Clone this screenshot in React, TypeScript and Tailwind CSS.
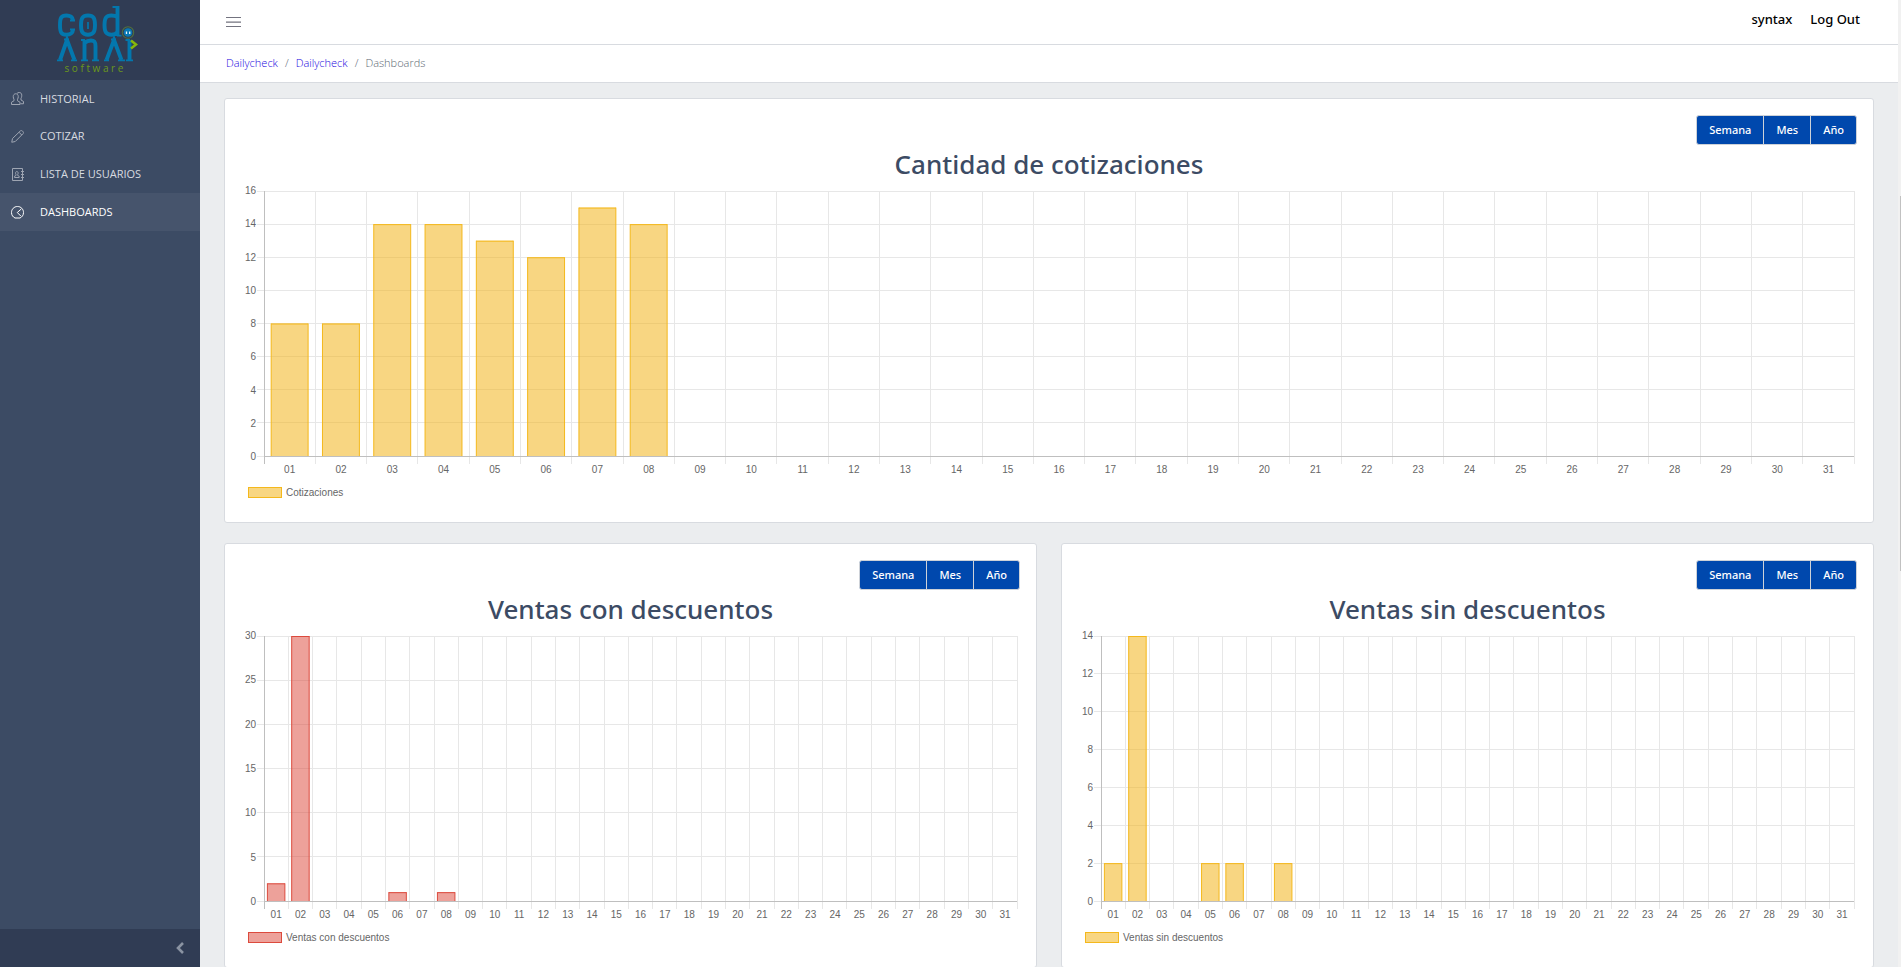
import type { ReactNode } from "react";

type Tone = { fill: string; stroke: string };

const YELLOW: Tone = { fill: "#f2b41c8c", stroke: "#f4b81c" };
const RED: Tone = { fill: "#dc463982", stroke: "#dc4a3d" };
const DAYS = Array.from({ length: 31 }, (_, i) => String(i + 1).padStart(2, "0"));

function Logo() {
  return (
    <svg viewBox="0 0 100 80" className="h-20 w-[100px]" role="img" aria-label="CodAnai software">
      <g fill="none" stroke="#0377ad" strokeWidth="3.900">
        <path d="M23 20.500C23 17 20 15.500 16.500 15.500C11 15.500 10 18 10 25C10 32 11 34.700 16.500 34.700C20 34.700 23 33 23 29.500" />
        <path d="M38 15.500C32.500 15.500 31 18 31 25C31 32 32.500 34.700 38 34.700C43.500 34.700 45 32 45 25C45 18 43.500 15.500 38 15.500Z" />
        <path d="M38 22V29" strokeWidth="1.700" />
        <path d="M67.500 6V36M67.500 17C65.500 15.800 63.500 15.500 61.500 15.500C56 15.500 54.500 18 54.500 25C54.500 32 56 34.700 61.500 34.700C64 34.700 66 34 67.500 32" />
        <path d="M62.500 7H69M67 35.700H71.500M20 20.500H25M20 29.500H25" strokeWidth="1.800" />
        <path d="M10 60L17 40L24.500 60M56.500 60L64 40L71.500 60" />
        <path d="M34.500 40V60M34.500 43C37 40.800 39 40.500 41 40.500C44.500 40.500 45.500 42 45.500 46V60M79.500 40V60" />
        <path d="M7 60.300H13M21 60.300H27M31 40H35M31 60.300H38M42 60.300H49M54 60.300H59M68 60.300H75M14 39.500H19M61 39.500H66M75.500 40H80M76 60.300H83" strokeWidth="1.800" />
      </g>
      <circle cx="78" cy="32.500" r="5.700" fill="none" stroke="#4f7040" strokeWidth="1.100" />
      <circle cx="78" cy="32.500" r="4.300" fill="#0879b5" />
      <path d="M76.500 31.500V34M79.700 31.500V34" stroke="#e9f5fb" strokeWidth="1.300" />
      <path d="M81 40.500L86 44.500L81 48.500" fill="none" stroke="#86b80b" strokeWidth="2.500" />
      <text x="14.500" y="72" fill="#6a981b" fontFamily="Open Sans, sans-serif" fontSize="10" letterSpacing="2.600">
        software
      </text>
    </svg>
  );
}

function Icon({ children }: { children: ReactNode }) {
  return (
    <svg viewBox="0 0 26 26" className="size-[13px] shrink-0" fill="none" stroke="currentColor" strokeWidth="2" aria-hidden="true">
      {children}
    </svg>
  );
}

const NAV = [
  {
    label: "HISTORIAL",
    icon: (
      <Icon>
        <path d="M1 25V20.500L6 17.500V14.500C5 13 4.500 11.500 4.500 9C4.500 5.500 6.800 3.500 9.500 3.500C12.200 3.500 14.500 5.500 14.500 9C14.500 11.500 14 13 13 14.500V17.500L18 20.500V25Z" />
        <path d="M12 3C13 1.500 14.500 1 16.500 1C19.500 1 21.500 3 21.500 6.500C21.500 9.500 21 11 20 12.500V16L25 19V23.500H19" />
      </Icon>
    ),
  },
  {
    label: "COTIZAR",
    icon: (
      <Icon>
        <path d="M1.500 24.500L3 17L18.500 2C20 .8 21.500 .8 23 2.200L23.800 3C25.200 4.500 25.200 6 24 7.500L8.500 23L1.500 24.500ZM16 4.500L21.500 10" />
      </Icon>
    ),
  },
  {
    label: "LISTA DE USUARIOS",
    icon: (
      <Icon>
        <path d="M3 1H23V25H3ZM20 7H26M20 13H26M20 19H26" />
        <path d="M7 19V16.500L10 15V13C9.200 12 9.200 11 9.200 10C9.200 8.200 10 7 11.700 7C13.400 7 14.200 8.200 14.200 10C14.200 11 14.200 12 13.400 13V15L16.400 16.500V19Z" />
      </Icon>
    ),
  },
  {
    label: "DASHBOARDS",
    active: true,
    icon: (
      <Icon>
        <path d="M8 24C4 22 1 18.500 1 13C1 6.500 6 1 13 1C20 1 25 6.500 25 13C25 18.500 22 22 18 24ZM20.500 6L12.500 13L19.500 20" />
      </Icon>
    ),
  },
];

function Sidebar() {
  return (
    <aside className="flex w-[200px] shrink-0 flex-col bg-[#3c4b64]">
      <a href="#inicio" className="flex h-20 justify-center bg-[#303c54]">
        <Logo />
      </a>
      <nav className="grid h-[151px] grid-rows-4">
        {NAV.map((item) => (
          <a
            key={item.label}
            href="#menu"
            aria-current={item.active ? "page" : undefined}
            className={
              item.active
                ? "flex items-center gap-4 bg-[#46546c] pl-[11px] text-[11px] text-white"
                : "flex items-center gap-4 pl-[11px] text-[11px] text-[#d8dbe0]"
            }
          >
            <span className={item.active ? "text-white" : "text-[#9ea5b2]"}>{item.icon}</span>
            {item.label}
          </a>
        ))}
      </nav>
      <button type="button" aria-label="Contraer menú" className="mt-auto flex h-[38px] items-center justify-end bg-[#303c54] pr-4 text-[#8a93a2]">
        <svg viewBox="0 0 8 12" className="h-3 w-2" fill="none" stroke="currentColor" strokeWidth="2.600" aria-hidden="true">
          <path d="M7 1L2 6L7 11" />
        </svg>
      </button>
    </aside>
  );
}

function Topbar() {
  return (
    <header className="bg-white">
      <div className="flex h-[45px] items-center justify-between border-b border-[#d8dbe0] pr-[38px] pl-[26px]">
        <button type="button" aria-label="Menú" className="text-[#73737f]">
          <svg viewBox="0 0 15 11" className="h-[11px] w-[15px]" stroke="currentColor" aria-hidden="true">
            <path d="M0 .5H15M0 5.200H15M0 9.500H15" strokeWidth="1.200" />
          </svg>
        </button>
        <nav className="flex gap-[18px] pb-1 font-['Noto_Sans','Open_Sans',sans-serif] text-[13px] font-medium text-black">
          <a href="#perfil">syntax</a>
          <a href="#salir">Log Out</a>
        </nav>
      </div>
      <nav aria-label="Ruta" className="flex h-[38px] items-center gap-[7px] border-b border-[#d8dbe0] pl-[26px] text-[11px] font-light text-[#5c6873]">
        <a href="#dailycheck" className="text-[#2105e0]">Dailycheck</a>
        <span>/</span>
        <a href="#dailycheck" className="text-[#2105e0]">Dailycheck</a>
        <span>/</span>
        <span>Dashboards</span>
      </nav>
    </header>
  );
}

function PeriodButtons() {
  return (
    <div className="flex justify-end">
      <div className="flex h-[30px] divide-x divide-[#ced2d8] overflow-hidden rounded-[3px] border border-[#ced2d8] bg-[#0048ad] font-['Noto_Sans','Open_Sans',sans-serif] text-[11px] font-medium text-white">
        <button type="button" className="px-3">Semana</button>
        <button type="button" className="px-3">Mes</button>
        <button type="button" className="px-3">Año</button>
      </div>
    </div>
  );
}

type ChartProps = { title: string; label: string; max: number; step: number; values: number[]; tone: Tone };

function ChartCard({ title, label, max, step, values, tone }: ChartProps) {
  const ticks = Array.from({ length: max / step + 1 }, (_, i) => max - i * step);
  return (
    <section className="min-w-0 rounded-[3px] border border-[#d8dbe0] bg-white p-4">
      <PeriodButtons />
      <h2 className="h-10 text-center font-['Noto_Sans','Open_Sans',sans-serif] text-[26px] leading-[38px] font-medium text-[#3c4b64]">{title}</h2>
      <div className="pt-[6px] pr-[3px] font-['Liberation_Sans',sans-serif] text-[10px] leading-[10px] text-[#666]">
        <div className="flex h-[266px]">
          <div className="-my-[5px] flex w-[23px] flex-col justify-between pr-2 text-right">
            {ticks.map((t) => (
              <span key={t}>{t}</span>
            ))}
          </div>
          <svg className="h-[266px] min-w-0 flex-1 overflow-visible" role="img" aria-label={title}>
            <g stroke="#e7e7e7" shapeRendering="crispEdges">
              {ticks.map((t, i) => {
                const y = Math.floor((i * 265) / (ticks.length - 1)) + 0.5;
                return <line key={t} x1="-7" x2="100%" y1={y} y2={y} />;
              })}
              {DAYS.map((d, i) => (
                <line key={d} x1={`${((i + 1) * 100) / 31}%`} x2={`${((i + 1) * 100) / 31}%`} y1="0" y2="273" />
              ))}
            </g>
            {values.map((v, i) => {
              if (v === 0) return null;
              const x = ((i + 0.14) * 100) / 31;
              const w = 72 / 31;
              const h = (v * 265) / max;
              return (
                <g key={DAYS[i]}>
                  <rect x={`${x}%`} width={`${w}%`} y={265 - h} height={h} fill={tone.fill} />
                  <g stroke={tone.stroke} strokeWidth="1">
                    <line x1={`${x}%`} x2={`${x}%`} y1={265 - h} y2="265" />
                    <line x1={`${x + w}%`} x2={`${x + w}%`} y1={265 - h} y2="265" />
                    <line x1={`${x}%`} x2={`${x + w}%`} y1={265.5 - h} y2={265.5 - h} />
                  </g>
                </g>
              );
            })}
            <g stroke="#bfbfbf" shapeRendering="crispEdges">
              <line x1="0.5" x2="0.5" y1="0" y2="273" />
              <line x1="0" x2="100%" y1="265.5" y2="265.5" />
            </g>
          </svg>
        </div>
        <div className="flex pt-2 pl-[23px] text-center">
          {DAYS.map((d) => (
            <span key={d} className="min-w-0 flex-1">{d}</span>
          ))}
        </div>
        <div className="flex items-center gap-1 pt-3 pb-2 pl-[7px]">
          <span className="h-[11px] w-[34px] border" style={{ backgroundColor: tone.fill, borderColor: tone.stroke }} />
          {label}
        </div>
      </div>
    </section>
  );
}

export default function App() {
  return (
    <div className="flex h-screen overflow-hidden bg-[#ebedef] font-['Open_Sans','Noto_Sans',sans-serif]">
      <Sidebar />
      <div className="min-w-0 flex-1">
        <Topbar />
        <main className="grid grid-cols-2 gap-x-6 gap-y-5 px-6 pt-[15px]">
          <div className="col-span-2 grid">
            <ChartCard title="Cantidad de cotizaciones" label="Cotizaciones" max={16} step={2} values={[8, 8, 14, 14, 13, 12, 15, 14]} tone={YELLOW} />
          </div>
          <ChartCard title="Ventas con descuentos" label="Ventas con descuentos" max={30} step={5} values={[2, 30, 0, 0, 0, 1, 0, 1]} tone={RED} />
          <ChartCard title="Ventas sin descuentos" label="Ventas sin descuentos" max={14} step={2} values={[2, 14, 0, 0, 2, 2, 0, 2]} tone={YELLOW} />
        </main>
      </div>
      <div className="flex w-[3px] shrink-0 justify-end bg-[#f1f1f1] pt-[196px]">
        <div className="h-[375px] w-px bg-[#c1c1c1]" />
      </div>
    </div>
  );
}
